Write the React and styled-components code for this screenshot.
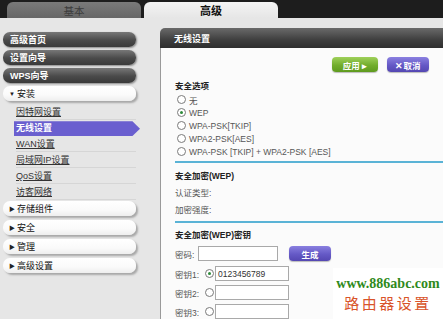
import React from "react";
import styled, { createGlobalStyle } from "styled-components";

const GlobalStyle = createGlobalStyle`
  html, body {
    margin: 0;
    padding: 0;
    background: #e6e6e6;
  }
  body {
    width: 443px;
    height: 319px;
    overflow: hidden;
    font-family: "Liberation Sans", "Noto Sans CJK SC", sans-serif;
  }
`;

const Page = styled.div`
  position: relative;
  width: 443px;
  height: 319px;
  overflow: hidden;
  background: #e6e6e6;
`;

const TopBar = styled.div`
  height: 18px;
  background: #1d1d1d;
  display: flex;
  align-items: flex-end;
  gap: 3px;
  padding-left: 7px;
`;

const Tab = styled.div`
  width: 134px;
  height: 16px;
  border-radius: 6px 6px 0 0;
  display: flex;
  align-items: center;
  justify-content: center;
  font-size: ${(p) => (p.active ? "11px" : "10.5px")};
  font-weight: ${(p) => (p.active ? "bold" : "normal")};
  color: ${(p) => (p.active ? "#111" : "#3c3c3c")};
  background: ${(p) =>
    p.active
      ? "linear-gradient(#f4f4f4, #e6e6e6)"
      : "linear-gradient(#7a7a7a, #666)"};
`;

const Body = styled.div`
  display: flex;
  gap: 24px;
  padding-left: 3px;
`;

const Sidebar = styled.div`
  width: 133px;
  flex: none;
  padding-top: 14px;
  display: flex;
  flex-direction: column;
`;

const Pill = styled.div`
  height: 15px;
  margin-bottom: ${(p) => (p.dark ? "3px" : "4px")};
  border-radius: 7px;
  display: flex;
  align-items: center;
  padding-left: ${(p) => (p.dark ? "7px" : "6px")};
  font-size: 9px;
  font-weight: ${(p) => (p.dark ? "bold" : "normal")};
  color: ${(p) => (p.dark ? "#fff" : "#111")};
  background: ${(p) =>
    p.dark
      ? "linear-gradient(#777, #4a4a4a 55%, #3a3a3a)"
      : "linear-gradient(#fff, #fafafa 60%, #eee)"};
  box-shadow: ${(p) =>
    p.dark ? "1px 1px 2px #888" : "2px 2px 2px #a8a8a8"};
`;

const Arrow = styled.span`
  font-size: 6px;
  margin-right: 2px;
  color: #222;
`;

const SubList = styled.div`
  display: flex;
  flex-direction: column;
  margin-top: -1px;
  margin-bottom: 1px;
`;

const SubItem = styled.div`
  height: 15px;
  margin-left: ${(p) => (p.active ? "11px" : "13px")};
  padding-left: ${(p) => (p.active ? "2px" : "0")};
  border-bottom: 1px solid ${(p) => (p.active ? "transparent" : "#d6d6d6")};
  display: flex;
  align-items: center;
  font-size: 9px;
  color: ${(p) => (p.active ? "#fff" : "#333")};
  font-weight: ${(p) => (p.active ? "bold" : "normal")};
  text-decoration: ${(p) => (p.active ? "none" : "underline")};
  background: ${(p) => (p.active ? "#6a5fcf" : "transparent")};
  clip-path: ${(p) =>
    p.active
      ? "polygon(0 8%, 94% 8%, 100% 54%, 94% 100%, 0 100%)"
      : "none"};
  width: ${(p) => (p.active ? "124px" : "120px")};
`;

const Main = styled.div`
  flex: 1;
  margin-top: 10px;
  display: flex;
  flex-direction: column;
  height: 320px;
`;

const PanelHeader = styled.div`
  height: 20px;
  border-radius: 5px 0 0 0;
  background: linear-gradient(#6a6a6a, #3e3e3e 60%, #2e2e2e);
  color: #fff;
  font-weight: bold;
  font-size: 9px;
  display: flex;
  align-items: center;
  padding-left: 14px;
`;

const PanelBody = styled.div`
  flex: 1;
  background: #fbfbfb;
  border-left: 1px solid #9a9a9a;
  padding-left: 14px;
  font-size: 8.5px;
  color: #555;
`;

const ButtonRow = styled.div`
  display: flex;
  justify-content: flex-end;
  gap: 9px;
  padding-right: 14px;
  margin-top: 9px;
`;

const Btn = styled.div`
  height: 15px;
  width: ${(p) => p.w}px;
  border-radius: 4px;
  display: flex;
  align-items: center;
  justify-content: center;
  font-size: 8.5px;
  font-weight: bold;
  color: #fff;
  background: ${(p) =>
    p.green
      ? "linear-gradient(#9fd05a, #72ad2c 55%, #5e9a1e)"
      : "linear-gradient(#8a80e0, #6559c6 55%, #5447b2)"};
  box-shadow: 0 1px 1px #bbb;
`;

const Title = styled.div`
  font-weight: bold;
  color: #222;
  height: 13px;
  line-height: 13px;
  margin-top: ${(p) => p.mt}px;
`;

const RadioRow = styled.div`
  height: 13px;
  display: flex;
  align-items: center;
  padding-left: 2px;
  gap: 3px;
`;

const Radio = styled.span`
  width: 7px;
  height: 7px;
  border-radius: 50%;
  border: 1px solid #7a7a7a;
  background: #fff;
  display: inline-flex;
  align-items: center;
  justify-content: center;
  flex: none;
  margin-right: ${(p) => p.mr || 0}px;
  &::after {
    content: "";
    width: 3px;
    height: 3px;
    border-radius: 50%;
    background: ${(p) => (p.checked ? "#2d8a3a" : "transparent")};
  }
`;

const Divider = styled.div`
  height: 2px;
  background: #5ab3d6;
  margin-top: ${(p) => p.mt}px;
`;

const InfoRow = styled.div`
  height: 17px;
  display: flex;
  align-items: center;
`;

const FieldRow = styled.div`
  height: 15px;
  display: flex;
  align-items: center;
  margin-top: ${(p) => p.mt}px;
`;

const Label = styled.span`
  width: ${(p) => p.w}px;
  flex: none;
`;

const Input = styled.div`
  width: ${(p) => p.w}px;
  height: 13px;
  border: 1px solid #a9a9a9;
  background: #fff;
  font-size: 8.5px;
  color: #333;
  display: flex;
  align-items: center;
  padding-left: 2px;
  box-sizing: content-box;
  margin-right: ${(p) => p.mr || 0}px;
`;

const Watermark = styled.div`
  position: absolute;
  left: 333px;
  top: 268px;
  width: 110px;
  height: 51px;
  background: #fff;
  display: flex;
  flex-direction: column;
  align-items: center;
`;

const WmUrl = styled.div`
  font-family: "Liberation Serif", serif;
  font-weight: bold;
  font-size: 14px;
  color: #2f8a1c;
  margin-top: 9px;
  line-height: 14px;
`;

const WmText = styled.div`
  font-family: "Noto Sans CJK SC", sans-serif;
  font-size: 15px;
  color: #d9542a;
  letter-spacing: 2.5px;
  margin-top: 4px;
  line-height: 16px;
`;

const subItems = ["因特网设置", "无线设置", "WAN设置", "局域网IP设置", "QoS设置", "访客网络"];
const radios = ["无", "WEP", "WPA-PSK[TKIP]", "WPA2-PSK[AES]", "WPA-PSK [TKIP] + WPA2-PSK [AES]"];

export default function App() {
  return (
    <Page>
      <GlobalStyle />
      <TopBar>
        <Tab>基本</Tab>
        <Tab active>高级</Tab>
      </TopBar>
      <Body>
        <Sidebar>
          <Pill dark>高级首页</Pill>
          <Pill dark>设置向导</Pill>
          <Pill dark>WPS向导</Pill>
          <Pill>
            <Arrow>▼</Arrow>安装
          </Pill>
          <SubList>
            {subItems.map((s) => (
              <SubItem key={s} active={s === "无线设置"}>
                {s}
              </SubItem>
            ))}
          </SubList>
          {["存储组件", "安全", "管理", "高级设置"].map((s) => (
            <Pill key={s}>
              <Arrow>▶</Arrow>
              {s}
            </Pill>
          ))}
        </Sidebar>
        <Main>
          <PanelHeader>无线设置</PanelHeader>
          <PanelBody>
            <ButtonRow>
              <Btn green w={46}>应用 ▸</Btn>
              <Btn w={42}>✕取消</Btn>
            </ButtonRow>
            <Title mt={8}>安全选项</Title>
            {radios.map((r) => (
              <RadioRow key={r}>
                <Radio checked={r === "WEP"} />
                {r}
              </RadioRow>
            ))}
            <Divider mt={3} />
            <Title mt={7}>安全加密(WEP)</Title>
            <InfoRow>认证类型:</InfoRow>
            <InfoRow>加密强度:</InfoRow>
            <Divider mt={4} />
            <Title mt={6}>安全加密(WEP)密钥</Title>
            <FieldRow mt={4}>
              <Label w={23}>密码:</Label>
              <Input w={76} mr={11} />
              <Btn w={42}>生成</Btn>
            </FieldRow>
            {[1, 2, 3].map((n) => (
              <FieldRow key={n} mt={n === 1 ? 5 : 4}>
                <Label w={30}>密钥{n}:</Label>
                <Radio checked={n === 1} mr={1} />
                <Input w={70}>{n === 1 ? "0123456789" : ""}</Input>
              </FieldRow>
            ))}
          </PanelBody>
        </Main>
      </Body>
      <Watermark>
        <WmUrl>www.886abc.com</WmUrl>
        <WmText>路由器设置</WmText>
      </Watermark>
    </Page>
  );
}
